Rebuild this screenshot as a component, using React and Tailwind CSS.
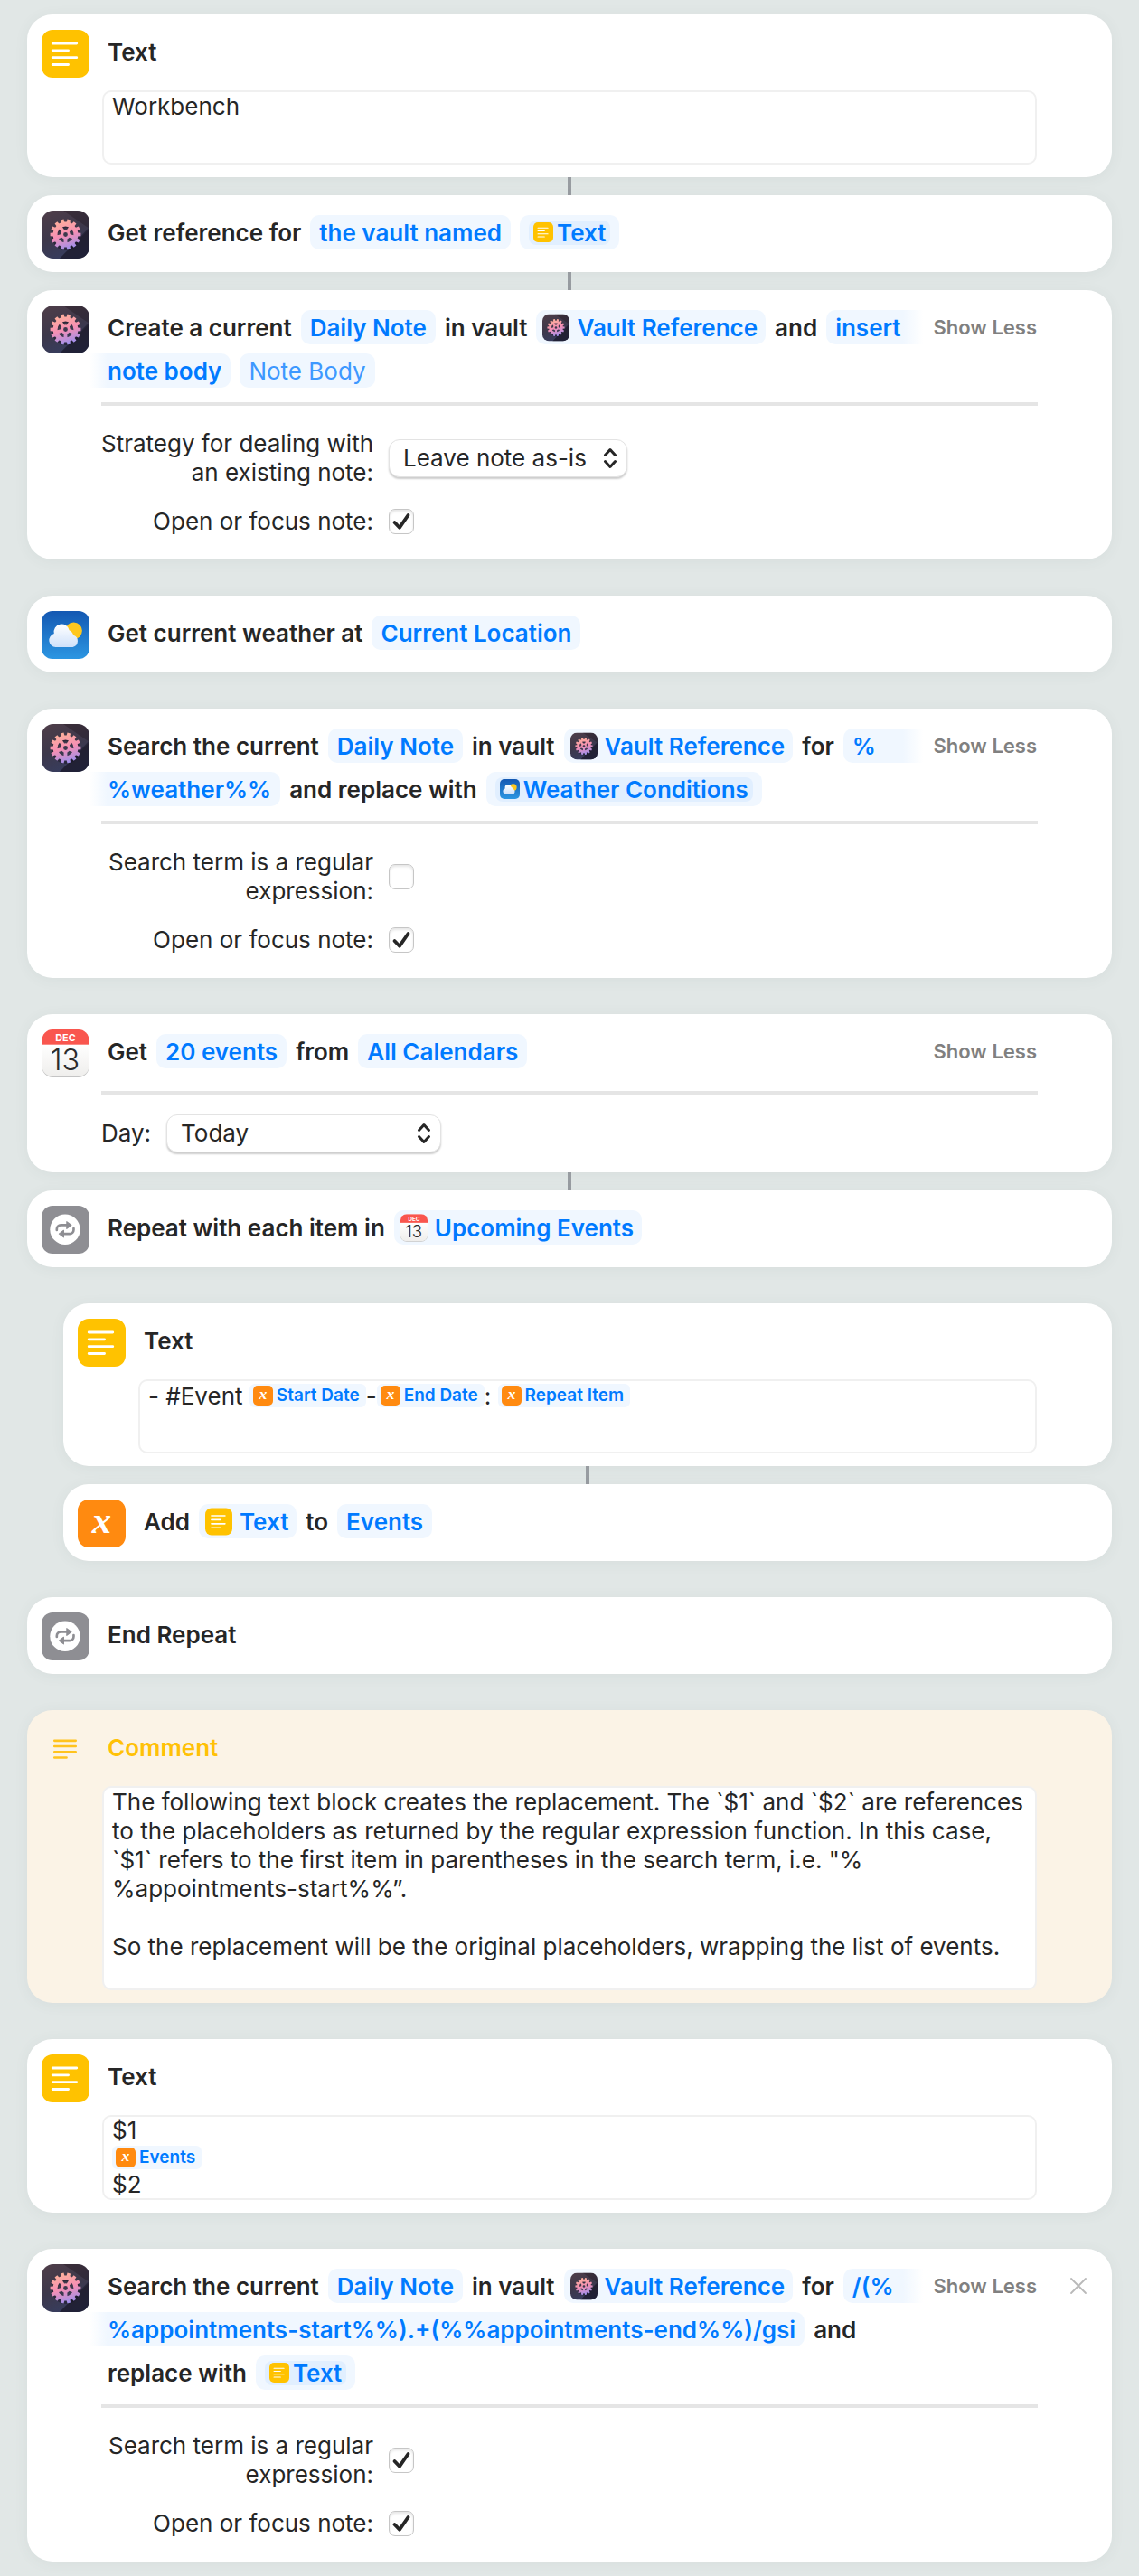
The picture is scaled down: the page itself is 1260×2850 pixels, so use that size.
import React, { useId } from 'react';

const TextIcon = ({ className }) => (
  <svg viewBox="0 0 52 52" className={className} aria-hidden="true">
    <rect width="52" height="52" rx="12" fill="#ffc200" />
    <path d="M12 14.7h26M12 22.4h17M12 30.1h26M12 37.8h17" stroke="#fff" strokeWidth="2.8" strokeLinecap="round" />
  </svg>
);

const CommentIcon = ({ className }) => (
  <svg viewBox="0 0 52 52" className={className} aria-hidden="true">
    <path d="M14 16.5h23M14 22.6h23M14 28.7h23M14 34.8h13" stroke="#ffc31f" strokeWidth="2.6" strokeLinecap="round" />
  </svg>
);

const RepeatIcon = ({ className }) => (
  <svg viewBox="0 0 52 52" className={className} aria-hidden="true">
    <rect width="52" height="52" rx="12" fill="#8e8e93" />
    <circle cx="25.5" cy="25.8" r="16.4" fill="#fff" />
    <g fill="none" stroke="#8e8e93" strokeWidth="2.6" strokeLinecap="round">
      <path d="M16.5 26.5v-1.2a4.3 4.3 0 0 1 4.3-4.3h6.7" />
      <path d="M34.8 24.5v1.8a4.3 4.3 0 0 1-4.3 4.3h-6.7" />
    </g>
    <path d="M27.3 17.3v7.6l5-3.8zM24 34.3v-7.6l-5 3.8z" fill="#8e8e93" stroke="#8e8e93" strokeLinejoin="round" />
  </svg>
);

const VariableIcon = ({ className }) => (
  <svg viewBox="0 0 52 52" className={className} aria-hidden="true">
    <rect width="52" height="52" rx="12" fill="#ff8a10" />
    <text x="26" y="36" textAnchor="middle" fill="#fff" fontFamily="Liberation Serif, serif" fontStyle="italic" fontWeight="700" fontSize="42">x</text>
  </svg>
);

const TEETH = Array.from({ length: 14 }, (_, i) => (i * 360) / 14);
const SPOKES = [18, 90, 162, 234, 306];

const polar = (r, deg) => {
  const t = (deg * Math.PI) / 180;
  return `${26.5 + r * Math.cos(t)},${26.5 + r * Math.sin(t)}`;
};

function VaultIcon({ className }) {
  const id = useId();
  return (
    <svg viewBox="0 0 53 53" className={className} aria-hidden="true">
      <defs>
        <linearGradient id={`${id}bg`} x1="0.2" y1="0" x2="0.6" y2="1">
          <stop offset="0" stopColor="#4d3d49" />
          <stop offset="0.5" stopColor="#3d384b" />
          <stop offset="1" stopColor="#363d60" />
        </linearGradient>
        <linearGradient id={`${id}gear`} gradientUnits="userSpaceOnUse" x1="22" y1="10" x2="32" y2="43">
          <stop offset="0" stopColor="#ffb09a" />
          <stop offset="0.5" stopColor="#f58fb4" />
          <stop offset="1" stopColor="#9a90f0" />
        </linearGradient>
        <clipPath id={`${id}clip`}>
          <rect width="53" height="53" rx="13" />
        </clipPath>
      </defs>
      <g clipPath={`url(#${id}clip)`}>
        <rect width="53" height="53" fill={`url(#${id}bg)`} />
        <path d="M24 0H53V53H20L53 20Z" fill="#160c14" opacity="0.3" />
        <path d="M53 18L20 53H53Z" fill="#10101f" opacity="0.4" />
      </g>
      <circle cx="27" cy="28.5" r="12.5" fill="none" stroke="#17121f" strokeWidth="6" opacity="0.45" />
      <g stroke={`url(#${id}gear)`} fill="none">
        <circle cx="26.5" cy="26.5" r="11.4" strokeWidth="5" />
        <circle cx="26.5" cy="26.5" r="3.8" strokeWidth="2.8" />
      </g>
      <g fill={`url(#${id}gear)`}>
        {TEETH.map((a) => (
          <polygon key={a} points={[polar(13, a - 9), polar(17, a - 6), polar(17, a + 6), polar(13, a + 9)].join(' ')} />
        ))}
        {SPOKES.map((a) => (
          <polygon key={a} points={[polar(4.4, a - 24), polar(10, a - 12), polar(10, a + 12), polar(4.4, a + 24)].join(' ')} />
        ))}
      </g>
    </svg>
  );
}

function WeatherIcon({ className }) {
  const id = useId();
  return (
    <svg viewBox="0 0 53 53" className={className} aria-hidden="true">
      <defs>
        <linearGradient id={`${id}sky`} x1="0" y1="0" x2="0" y2="1">
          <stop offset="0" stopColor="#1458b2" />
          <stop offset="1" stopColor="#2c96e2" />
        </linearGradient>
        <linearGradient id={`${id}cloud`} x1="0" y1="0" x2="0" y2="1">
          <stop offset="0" stopColor="#fff" />
          <stop offset="1" stopColor="#cfe1fa" />
        </linearGradient>
      </defs>
      <rect width="53" height="53" rx="12" fill={`url(#${id}sky)`} />
      <circle cx="35.5" cy="21.8" r="9.4" fill="#ffc81e" />
      <path
        d="M15.6 40a7.6 7.6 0 0 1-1.8-14.9A8.6 8.6 0 0 1 30.600 21.200a8 8 0 0 1 4.600 5.500A6.900 6.900 0 0 1 34.500 40Z"
        fill={`url(#${id}cloud)`}
      />
    </svg>
  );
}

function CalendarIcon({ className }) {
  const id = useId();
  return (
    <svg viewBox="0 0 53 54" className={className} aria-hidden="true">
      <defs>
        <clipPath id={`${id}clip`}>
          <rect width="53" height="53" rx="12" />
        </clipPath>
        <linearGradient id={`${id}page`} x1="0" y1="0" x2="0" y2="1">
          <stop offset="0.3" stopColor="#fff" />
          <stop offset="1" stopColor="#efeeec" />
        </linearGradient>
      </defs>
      <rect y="1" width="53" height="53" rx="12" fill="#c4c4c4" />
      <g clipPath={`url(#${id}clip)`}>
        <rect width="53" height="53" fill={`url(#${id}page)`} />
        <rect width="53" height="17" fill="#f9564e" />
      </g>
      <text x="26.500" y="13" textAnchor="middle" fill="#fff" fontFamily="Inter, sans-serif" fontWeight="700" fontSize="11">DEC</text>
      <text x="26" y="46" textAnchor="middle" fill="#2b2b2b" fontFamily="Inter, sans-serif" fontWeight="300" fontSize="33">13</text>
    </svg>
  );
}

/* ---- layout pieces ---- */

function Card({ tone = 'bg-white', children }) {
  return (
    <section className={`${tone} rounded-[28px] shadow-[0_2px_16px_rgba(60,90,90,0.06)]`}>{children}</section>
  );
}

const Link = () => <div className="w-1 h-5 mx-auto bg-[#989ca1]" />;
const Space = () => <div className="h-10" />;

function Header({ icon: Icon, children, showLess, closable }) {
  return (
    <div className="flex items-start min-h-[85px] pt-[17px] pb-[11px] pl-4">
      <Icon className="w-[53px] h-[53px] shrink-0" />
      <div className="flex-1 min-w-0 font-semibold">{children}</div>
      {showLess && (
        <button type="button" className="ml-3 h-12 text-[22px] font-semibold text-[#808080] whitespace-nowrap">
          Show Less
        </button>
      )}
      <div className="w-[83px] h-12 shrink-0 flex items-center pl-9">
        {closable && (
          <button type="button" aria-label="Remove action">
            <svg viewBox="0 0 20 20" className="w-5 h-5" fill="none" stroke="#b9b9b9" strokeWidth="1.8" strokeLinecap="round">
              <path d="M2 2l16 16M18 2L2 18" />
            </svg>
          </button>
        )}
      </div>
    </div>
  );
}

// A line that continues a wrapped chip starts flush so that the chip can bleed left
const Line = ({ flush, children }) => (
  <div className={`flex items-center gap-[10px] h-12 whitespace-nowrap ${flush ? '' : 'pl-5'}`}>{children}</div>
);

const Chip = ({ children }) => (
  <button type="button" className="h-[38px] px-[10px] rounded-[10px] bg-[#f0f7ff] text-[#007aff]">{children}</button>
);

const ChipStart = ({ children }) => (
  <button
    type="button"
    className="flex-1 h-[38px] pl-[10px] rounded-l-[10px] text-left text-[#007aff] bg-[linear-gradient(to_left,#ffffff,#f0f7ff_22px)]"
  >
    {children}
  </button>
);

const ChipEnd = ({ children }) => (
  <button
    type="button"
    className="h-[38px] pl-5 pr-[10px] rounded-r-[10px] text-[#007aff] bg-[linear-gradient(to_right,#ffffff,#f0f7ff_20px)]"
  >
    {children}
  </button>
);

const IconChip = ({ icon: Icon, children }) => (
  <button type="button" className="flex items-center gap-2 h-[38px] pl-[7px] pr-[9px] rounded-[10px] bg-[#f0f7ff] text-[#007aff]">
    <Icon className="w-[30px] h-[31px]" />
    {children}
  </button>
);

const TokenChip = ({ icon: Icon, children }) => (
  <button type="button" className="flex items-center h-[38px] px-[10px] rounded-[10px] bg-[#f0f7ff] text-[#007aff]">
    <span className="flex items-center gap-1 h-[27px] px-[5px] rounded-lg bg-[#e1efff]">
      <Icon className="w-[22px] h-[22px]" />
      {children}
    </span>
  </button>
);

const Token = ({ children }) => (
  <span className="flex items-center gap-1 h-[26px] pl-1 pr-[7px] rounded-md bg-[#f0f7ff] text-[#007aff] text-[19px] font-semibold">
    <VariableIcon className="w-[22px] h-[22px]" />
    {children}
  </span>
);

const FIELD = 'block w-full rounded-[10px] border-2 border-[#f0f0f0] bg-white px-[9px] outline-none';

const Field = ({ children }) => <div className="px-[83px] -mt-px pb-[14px]">{children}</div>;

const TextArea = ({ label, rows, pad, value }) => (
  <textarea
    aria-label={label}
    rows={rows}
    defaultValue={value}
    wrap="off"
    className={`${FIELD} ${pad} resize-none overflow-hidden leading-8`}
  />
);

const Options = ({ tight, children }) => (
  <div className={`mx-[82px] border-t-4 border-[#e5e5e5] flex flex-col gap-[22px] ${tight ? 'py-[22px]' : 'py-[26px]'}`}>
    {children}
  </div>
);

function Select({ id, value, options, width }) {
  return (
    <span className={`relative ${width}`}>
      <select
        id={id}
        defaultValue={value}
        className="appearance-none w-full h-[42px] pl-[15px] pr-10 rounded-xl border border-[#e3e3e3] bg-white shadow-[0_2px_2px_rgba(0,0,0,0.2)]"
      >
        {options.map((o) => (
          <option key={o}>{o}</option>
        ))}
      </select>
      <svg
        viewBox="0 0 16 24"
        className="absolute right-[11px] top-[9px] w-4 h-6 pointer-events-none"
        fill="none"
        stroke="#262626"
        strokeWidth="3"
        strokeLinecap="round"
        strokeLinejoin="round"
      >
        <path d="M2.5 8.5L8 2.5L13.5 8.5M2.5 15.5L8 21.5L13.5 15.5" />
      </svg>
    </span>
  );
}

function SelectRow({ label, labelClass, ...rest }) {
  const id = useId();
  return (
    <div className="flex items-center gap-[17px] leading-8">
      <label htmlFor={id} className={labelClass}>{label}</label>
      <Select id={id} {...rest} />
    </div>
  );
}

function CheckRow({ label, checked }) {
  const id = useId();
  return (
    <div className="flex items-center gap-[17px] leading-8">
      <label htmlFor={id} className="w-[301px] text-right">{label}</label>
      <span className="relative w-7 h-7">
        <input
          id={id}
          type="checkbox"
          defaultChecked={checked}
          className="peer appearance-none block w-7 h-7 rounded-[7px] border border-[#c6c6c6] bg-white shadow-[inset_0_2px_3px_rgba(0,0,0,0.1)]"
        />
        <svg
          viewBox="0 0 28 28"
          className="absolute inset-0 w-7 h-7 pointer-events-none hidden peer-checked:block"
          fill="none"
          stroke="#262626"
          strokeWidth="3.8"
          strokeLinecap="round"
          strokeLinejoin="round"
        >
          <path d="M6.5 15L12 20.7L21.5 7" />
        </svg>
      </span>
    </div>
  );
}

const COMMENT = `The following text block creates the replacement. The \`$1\` and \`$2\` are references
to the placeholders as returned by the regular expression function. In this case,
\`$1\` refers to the first item in parentheses in the search term, i.e. "%
%appointments-start%%”.

So the replacement will be the original placeholders, wrapping the list of events.`;

export default function App() {
  return (
    <main className="min-h-screen bg-[#e1e7e6] px-[30px] py-4 font-[Inter,sans-serif] text-[26px] text-[#262626]">
      <Card>
        <Header icon={TextIcon}>
          <Line>Text</Line>
        </Header>
        <Field>
          <TextArea label="Text" rows={2} pad="pb-[14px]" value="Workbench" />
        </Field>
      </Card>
      <Link />

      <Card>
        <Header icon={VaultIcon}>
          <Line>
            Get reference for <Chip>the vault named</Chip>
            <TokenChip icon={TextIcon}>Text</TokenChip>
          </Line>
        </Header>
      </Card>
      <Link />

      <Card>
        <Header icon={VaultIcon} showLess>
          <Line>
            Create a current <Chip>Daily Note</Chip> in vault
            <IconChip icon={VaultIcon}>Vault Reference</IconChip> and
            <ChipStart>insert</ChipStart>
          </Line>
          <Line flush>
            <ChipEnd>note body</ChipEnd>
            <Chip>
              <span className="font-normal text-[#3d98ff]">Note Body</span>
            </Chip>
          </Line>
        </Header>
        <Options>
          <SelectRow
            label="Strategy for dealing with an existing note:"
            labelClass="w-[301px] text-right"
            width="w-[264px]"
            value="Leave note as-is"
            options={['Leave note as-is', 'Replace note']}
          />
          <CheckRow label="Open or focus note:" checked />
        </Options>
      </Card>
      <Space />

      <Card>
        <Header icon={WeatherIcon}>
          <Line>
            Get current weather at <Chip>Current Location</Chip>
          </Line>
        </Header>
      </Card>
      <Space />

      <Card>
        <Header icon={VaultIcon} showLess>
          <Line>
            Search the current <Chip>Daily Note</Chip> in vault
            <IconChip icon={VaultIcon}>Vault Reference</IconChip> for
            <ChipStart>%</ChipStart>
          </Line>
          <Line flush>
            <ChipEnd>%weather%%</ChipEnd> and replace with
            <TokenChip icon={WeatherIcon}>Weather Conditions</TokenChip>
          </Line>
        </Header>
        <Options>
          <CheckRow label="Search term is a regular expression:" />
          <CheckRow label="Open or focus note:" checked />
        </Options>
      </Card>
      <Space />

      <Card>
        <Header icon={CalendarIcon} showLess>
          <Line>
            Get <Chip>20 events</Chip> from <Chip>All Calendars</Chip>
          </Line>
        </Header>
        <Options tight>
          <SelectRow label="Day:" width="w-[304px]" value="Today" options={['Today', 'Tomorrow']} />
        </Options>
      </Card>
      <Link />

      <Card>
        <Header icon={RepeatIcon}>
          <Line>
            Repeat with each item in <IconChip icon={CalendarIcon}>Upcoming Events</IconChip>
          </Line>
        </Header>
      </Card>
      <Space />

      <div className="pl-10">
        <Card>
          <Header icon={TextIcon}>
            <Line>Text</Line>
          </Header>
          <Field>
            <div role="textbox" aria-label="Text" className={`${FIELD} min-h-[82px]`}>
              <div className="flex items-center h-8 whitespace-pre">
                <span>- #Event </span>
                <Token>Start Date</Token>
                <span>-</span>
                <Token>End Date</Token>
                <span>: </span>
                <Token>Repeat Item</Token>
              </div>
            </div>
          </Field>
        </Card>
        <Link />

        <Card>
          <Header icon={VariableIcon}>
            <Line>
              Add <IconChip icon={TextIcon}>Text</IconChip> to <Chip>Events</Chip>
            </Line>
          </Header>
        </Card>
      </div>
      <Space />

      <Card>
        <Header icon={RepeatIcon}>
          <Line>End Repeat</Line>
        </Header>
      </Card>
      <Space />

      <Card tone="bg-[#fbf3e6]">
        <Header icon={CommentIcon}>
          <Line>
            <span className="text-[#ffc107]">Comment</span>
          </Line>
        </Header>
        <Field>
          <TextArea label="Comment" rows={6} pad="pb-[30px]" value={COMMENT} />
        </Field>
      </Card>
      <Space />

      <Card>
        <Header icon={TextIcon}>
          <Line>Text</Line>
        </Header>
        <Field>
          <div role="textbox" aria-label="Text" className={`${FIELD} leading-[30px]`}>
            <div>$1</div>
            <div className="flex items-center h-[30px]">
              <Token>Events</Token>
            </div>
            <div>$2</div>
          </div>
        </Field>
      </Card>
      <Space />

      <Card>
        <Header icon={VaultIcon} showLess closable>
          <Line>
            Search the current <Chip>Daily Note</Chip> in vault
            <IconChip icon={VaultIcon}>Vault Reference</IconChip> for
            <ChipStart>/(%</ChipStart>
          </Line>
          <Line flush>
            <ChipEnd>%appointments-start%%).+(%%appointments-end%%)/gsi</ChipEnd> and
          </Line>
          <Line>
            replace with <TokenChip icon={TextIcon}>Text</TokenChip>
          </Line>
        </Header>
        <Options>
          <CheckRow label="Search term is a regular expression:" checked />
          <CheckRow label="Open or focus note:" checked />
        </Options>
      </Card>
    </main>
  );
}
